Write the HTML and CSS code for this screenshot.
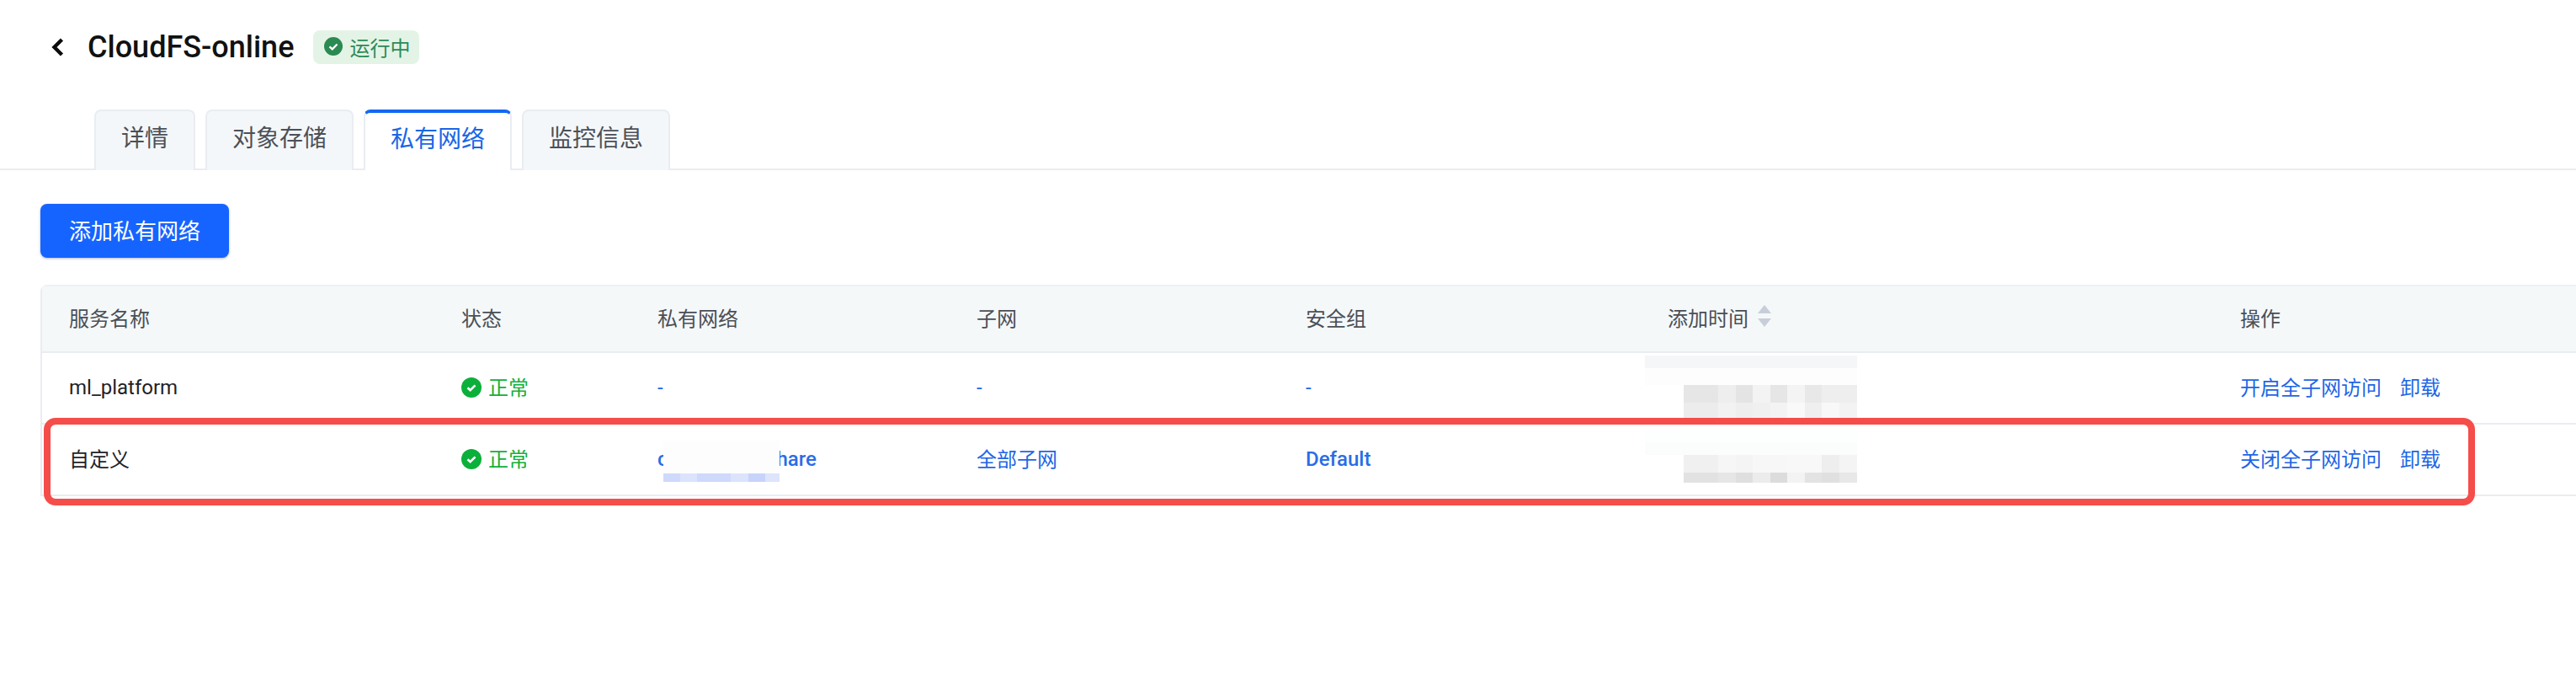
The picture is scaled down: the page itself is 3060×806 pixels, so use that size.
FILE: index.html
```html
<!DOCTYPE html>
<html lang="zh-CN">
<head>
<meta charset="utf-8">
<title>CloudFS-online</title>
<link rel="stylesheet" href="styles.css">
</head>
<body>
<header class="head">
  <svg class="back" width="16" height="22" viewBox="0 0 16 22"><path d="M13.500 2 4.500 11l9 9" fill="none" stroke="#0c0c0c" stroke-width="4.400"/></svg>
  <h1 class="title">CloudFS-online</h1>
  <span class="badge">
    <svg width="22" height="22" viewBox="0 0 22 22"><circle cx="11" cy="11" r="11" fill="#2a8a52"/><path d="M6.500 11.300 9.800 14.300 15.500 8.500" fill="none" stroke="#fff" stroke-width="2.400"/></svg>
    运行中
  </span>
</header>
<nav class="tabs">
  <a class="tab">详情</a>
  <a class="tab">对象存储</a>
  <a class="tab active">私有网络</a>
  <a class="tab">监控信息</a>
</nav>
<main class="content">
  <button class="primary">添加私有网络</button>
  <section class="table">
    <div class="row head-row">
      <div class="cell">服务名称</div>
      <div class="cell">状态</div>
      <div class="cell">私有网络</div>
      <div class="cell">子网</div>
      <div class="cell">安全组</div>
      <div class="cell">添加时间
        <svg class="sort" width="16" height="26" viewBox="0 0 16 26"><path d="M8 0 16 10H0Z M0 16H16L8 26Z" fill="#c8ced9"/></svg>
      </div>
      <div class="cell">操作</div>
    </div>
    <div class="row">
      <div class="cell latin">ml_platform</div>
      <div class="cell ok">
        <svg width="24" height="24" viewBox="0 0 24 24"><circle cx="12" cy="12" r="12" fill="#0bb03a"/><path d="M7.500 12.300 10.600 15.200 16.500 9.300" fill="none" stroke="#fff" stroke-width="2.600"/></svg>
        正常
      </div>
      <div class="cell link latin">-</div>
      <div class="cell link latin">-</div>
      <div class="cell link latin">-</div>
      <div class="cell">
        <svg class="mosaic mosaic-a" width="252" height="74" viewBox="0 0 252 74" shape-rendering="crispEdges">
          <rect width="252" height="15" fill="#f4f6f8"/>
          <rect y="15" width="252" height="20" fill="#fdfdfd"/>
          <rect x="46" y="35" width="21" height="21" fill="#e6e6e6"/><rect x="67" y="35" width="20" height="21" fill="#e6e6e6"/><rect x="87" y="35" width="21" height="21" fill="#eeeeee"/><rect x="108" y="35" width="20" height="21" fill="#e4e4e4"/><rect x="128" y="35" width="21" height="21" fill="#f3f3f3"/><rect x="149" y="35" width="20" height="21" fill="#e6e6e6"/><rect x="169" y="35" width="21" height="21" fill="#f4f4f4"/><rect x="190" y="35" width="20" height="21" fill="#e8e8e8"/><rect x="210" y="35" width="21" height="21" fill="#eeeeee"/><rect x="231" y="35" width="21" height="21" fill="#eeeeee"/>
          <rect x="46" y="56" width="21" height="18" fill="#ececec"/><rect x="67" y="56" width="20" height="18" fill="#ececec"/><rect x="87" y="56" width="21" height="18" fill="#f2f2f2"/><rect x="108" y="56" width="20" height="18" fill="#eeeeee"/><rect x="128" y="56" width="21" height="18" fill="#f0f0f0"/><rect x="149" y="56" width="20" height="18" fill="#f3f3f3"/><rect x="169" y="56" width="21" height="18" fill="#f9f9f9"/><rect x="190" y="56" width="20" height="18" fill="#efefef"/><rect x="210" y="56" width="21" height="18" fill="#f8f8f8"/><rect x="231" y="56" width="21" height="18" fill="#f3f3f3"/>
        </svg>
      </div>
      <div class="cell actions"><a>开启全子网访问</a><a>卸载</a></div>
    </div>
    <div class="row highlighted">
      <div class="cell">自定义</div>
      <div class="cell ok">
        <svg width="24" height="24" viewBox="0 0 24 24"><circle cx="12" cy="12" r="12" fill="#0bb03a"/><path d="M7.500 12.300 10.600 15.200 16.500 9.300" fill="none" stroke="#fff" stroke-width="2.600"/></svg>
        正常
      </div>
      <div class="cell link medium latin"><span class="vpc">c<span class="vpc-gap"></span>hare</span>
        <svg class="mosaic mosaic-c" width="138" height="49" viewBox="0 0 138 49" shape-rendering="crispEdges">
          <rect width="138" height="39" fill="#fdfdfe"/>
          <rect y="39" width="20" height="10" fill="#cfd9fb"/><rect x="20" y="39" width="20" height="10" fill="#dce3fc"/><rect x="40" y="39" width="40" height="10" fill="#cfd9fb"/><rect x="80" y="39" width="21" height="10" fill="#dce3fc"/><rect x="101" y="39" width="20" height="10" fill="#c8d3fb"/><rect x="121" y="39" width="17" height="10" fill="#dde4fc"/>
        </svg>
      </div>
      <div class="cell link">全部子网</div>
      <div class="cell link medium latin">Default</div>
      <div class="cell">
        <svg class="mosaic mosaic-b" width="252" height="63" viewBox="0 0 252 63" shape-rendering="crispEdges">
          <rect width="252" height="15" fill="#fdfefe"/>
          <rect y="15" width="252" height="15" fill="#fbfcfc"/>
          <rect x="46" y="30" width="21" height="21" fill="#f0f0f0"/><rect x="67" y="30" width="20" height="21" fill="#f0f0f0"/><rect x="87" y="30" width="21" height="21" fill="#f6f6f6"/><rect x="108" y="30" width="20" height="21" fill="#f4f4f4"/><rect x="128" y="30" width="21" height="21" fill="#f7f7f7"/><rect x="149" y="30" width="20" height="21" fill="#f7f7f7"/><rect x="169" y="30" width="21" height="21" fill="#f8f8f8"/><rect x="190" y="30" width="20" height="21" fill="#f8f8f8"/><rect x="210" y="30" width="21" height="21" fill="#eeeeee"/><rect x="231" y="30" width="21" height="21" fill="#f4f4f4"/>
          <rect x="46" y="51" width="21" height="12" fill="#e2e2e2"/><rect x="67" y="51" width="20" height="12" fill="#e2e2e2"/><rect x="87" y="51" width="21" height="12" fill="#e6e6e6"/><rect x="108" y="51" width="20" height="12" fill="#dfdfdf"/><rect x="128" y="51" width="21" height="12" fill="#ececec"/><rect x="149" y="51" width="20" height="12" fill="#dcdcdc"/><rect x="169" y="51" width="21" height="12" fill="#f3f3f3"/><rect x="190" y="51" width="20" height="12" fill="#e3e3e3"/><rect x="210" y="51" width="21" height="12" fill="#e0e0e0"/><rect x="231" y="51" width="21" height="12" fill="#e8e8e8"/>
        </svg>
      </div>
      <div class="cell actions"><a>关闭全子网访问</a><a>卸载</a></div>
    </div>
    <div class="callout-anchor"><div class="callout"></div></div>
  </section>
</main>
</body>
</html>
```

FILE: styles.css
```css
* { box-sizing: border-box; }
html, body { margin: 0; height: 100%; background: #fff; }
body {
  padding-top: 36px;
  font-family: Roboto, "Noto Sans CJK SC", sans-serif;
  font-size: 24px;
  color: #1f2329;
}

.head {
  display: flex;
  align-items: center;
  height: 40px;
  padding-left: 60px;
}
.back { flex: none; }
.title {
  margin: 0 23px 0 28px;
  font-size: 36px;
  font-weight: 500;
  color: #111;
  line-height: 40px;
}
.badge {
  display: flex;
  align-items: center;
  gap: 8px;
  height: 40px;
  padding: 0 11px 2px 13px;
  border-radius: 8px;
  background: #e3f4e6;
  color: #2f8a58;
}

.tabs {
  display: flex;
  gap: 12px;
  height: 72px;
  margin-top: 54px;
  padding-left: 112px;
  border-bottom: 2px solid #e9edf2;
}
.tab {
  height: 72px;
  padding: 0 30px;
  border: 2px solid #e9edf2;
  border-bottom: 0;
  border-radius: 8px 8px 0 0;
  background: #f4f7f9;
  color: #4c5058;
  font-size: 28px;
  line-height: 66px;
}
.tab.active {
  position: relative;
  border-top: 4px solid #1268f3;
  background: #fff;
  color: #1a66e6;
  line-height: 64px;
}

.content { padding: 40px 0 0 48px; }
.primary {
  display: block;
  width: 224px;
  height: 64px;
  padding: 0 0 4px;
  border: 0;
  border-radius: 8px;
  background: #1664ff;
  box-shadow: 0 1px 3px rgba(20, 50, 110, .35);
  color: #fff;
  font: inherit;
  font-size: 26px;
}

.table {
  margin-top: 32px;
  border-top: 2px solid #eef1f4;
  border-left: 2px solid #e9edf2;
  border-top-left-radius: 8px;
}
.row {
  position: relative;
  display: grid;
  grid-template-columns: 466px 233px 379px 391px 430px 680px 1fr;
  height: 85px;
  border-bottom: 2px solid #e9edf1;
}
.head-row {
  height: 79px;
  background: #f5f8f9;
  color: #4a4f57;
}
.cell {
  position: relative;
  display: flex;
  align-items: center;
  padding: 0 0 5px 32px;
  white-space: nowrap;
}
.latin { padding-bottom: 1px; }
.sort { margin: -2px 0 0 11px; }
.ok { gap: 8px; color: #10b03c; }
.ok svg { margin-top: 4px; }
.link { color: #1f66e5; }
.medium { font-weight: 500; color: #2a6de6; }
.vpc { display: flex; }
.vpc-gap { width: 129px; }
.actions { gap: 22px; color: #1f66e5; }

.mosaic { position: absolute; left: 5px; }
.mosaic-a { top: 3px; }
.mosaic-b { top: 6px; }
.mosaic-c { left: 39px; top: 19px; }

.callout-anchor { position: relative; height: 0; }
.callout {
  position: absolute;
  top: -93px;
  left: 2px;
  width: 2888px;
  height: 104px;
  border: 8px solid #f54d4a;
  border-radius: 14px;
  pointer-events: none;
}
```
